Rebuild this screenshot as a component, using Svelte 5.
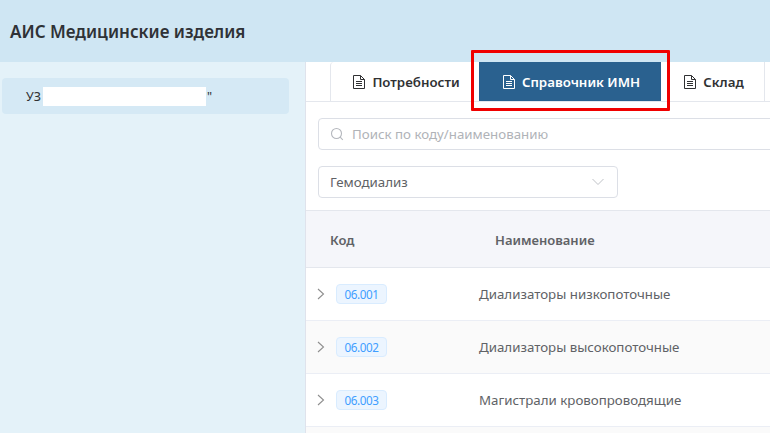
<script>
	const tabs = [
		{ name: 'Потребности', active: false },
		{ name: 'Справочник ИМН', active: true },
		{ name: 'Склад', active: false }
	];

	const rows = [
		{ code: '06.001', name: 'Диализаторы низкопоточные' },
		{ code: '06.002', name: 'Диализаторы высокопоточные' },
		{ code: '06.003', name: 'Магистрали кровопроводящие' },
		{ code: '', name: '' }
	];
</script>

<div class="page">
	<header class="top">АИС Медицинские изделия</header>
	<div class="body">
		<aside class="side">
			<div class="org">
				<span>УЗ</span>
				<span class="mask"></span>
				<span>"</span>
			</div>
		</aside>
		<main class="content">
			<nav class="tabs">
				{#each tabs as tab}
					<div class="tab" class:active={tab.active}>
						<svg width="14" height="16" viewBox="0 0 14 16" fill="none" stroke="currentColor" stroke-width="1">
							<path d="M1.500 1.500h7l4 4v9h-11z" />
							<path d="M8.500 1.500v4h4M4 7.500h6M4 9.500h6M4 11.500h6" />
						</svg>
						<span>{tab.name}</span>
					</div>
				{/each}
				<div class="marker"></div>
			</nav>
			<div class="filters">
				<div class="search">
					<svg width="14" height="14" viewBox="0 0 14 14" fill="none" stroke="#b4b7bd" stroke-width="1.1">
						<circle cx="6.5" cy="6.5" r="5" />
						<path d="M10.2 10.2l2.6 2.6" />
					</svg>
					<span>Поиск по коду/наименованию</span>
				</div>
				<div class="select">
					<span>Гемодиализ</span>
					<svg width="14" height="8" viewBox="0 0 14 8" fill="none" stroke="#bfc2c7" stroke-width="1">
						<path d="M1.500 1l5.500 5.500L12.500 1" />
					</svg>
				</div>
			</div>
			<div class="thead">
				<div class="code-col">Код</div>
				<div class="name-col">Наименование</div>
			</div>
			{#each rows as row, i}
				<div class="row" class:odd={i % 2 === 1}>
					{#if row.code}
						<svg width="8" height="12" viewBox="0 0 8 12" fill="none" stroke="#8e8e8e" stroke-width="1.1">
							<path d="M1 1l5.500 5L1 11" />
						</svg>
						<span class="tag">{row.code}</span>
						<span class="name">{row.name}</span>
					{/if}
				</div>
			{/each}
		</main>
	</div>
</div>

<style>
	:global(body) {
		margin: 0;
		overflow: hidden;
	}

	.page {
		width: 770px;
		height: 433px;
		overflow: hidden;
		font-family: 'Noto Sans', sans-serif;
		font-size: 13.3px;
		color: #303133;
		background: #fff;
	}

	.top {
		height: 62px;
		display: flex;
		align-items: center;
		padding-left: 10px;
		box-sizing: border-box;
		background: #cfe6f3;
		font-size: 17px;
		font-weight: 600;
		color: #2f3236;
	}

	.body {
		display: flex;
		height: 371px;
	}

	.side {
		width: 306px;
		flex: none;
		box-sizing: border-box;
		padding: 16px 16px 0 2px;
		background: #e4f2f9;
		border-right: 1px solid #dfe3ec;
	}

	.org {
		display: flex;
		align-items: center;
		height: 36px;
		padding-left: 24px;
		border-radius: 4px;
		background: #d5e9f5;
		font-size: 12.5px;
	}

	.mask {
		width: 163px;
		height: 19px;
		margin-left: 2px;
		margin-right: 1px;
		background: #fff;
	}

	.content {
		flex: 1;
		min-width: 0;
	}

	.tabs {
		display: flex;
		position: relative;
		height: 40px;
		box-sizing: border-box;
		padding-left: 24px;
		border-bottom: 1px solid #e4e7ed;
	}

	.tab {
		display: flex;
		align-items: center;
		justify-content: center;
		gap: 6px;
		height: 39px;
		padding-left: 2px;
		box-sizing: border-box;
		font-weight: 600;
		color: #303133;
		border-right: 1px solid #e4e7ed;
	}

	.tab:nth-child(1) {
		width: 149px;
		border-left: 1px solid #e4e7ed;
		border-top-left-radius: 4px;
		border-right: none;
	}

	.tab:nth-child(2) {
		width: 182px;
		background: #2a618f;
		color: #fff;
		border-right: none;
	}

	.tab:nth-child(3) {
		width: 104px;
	}

	.marker {
		position: absolute;
		left: 165px;
		top: -12px;
		width: 199px;
		height: 61px;
		box-sizing: border-box;
		border: 3px solid #f00000;
		border-radius: 1px;
	}

	.filters {
		display: flex;
		flex-direction: column;
		gap: 16px;
		padding: 16px 0 12px 12px;
	}

	.search,
	.select {
		display: flex;
		align-items: center;
		height: 32px;
		box-sizing: border-box;
		border: 1px solid #dcdfe6;
		border-radius: 4px;
	}

	.search {
		width: 470px;
		gap: 8px;
		padding-left: 11px;
		color: #b0b3b8;
	}

	.select {
		width: 300px;
		justify-content: space-between;
		padding: 0 12px 0 11px;
		color: #606266;
	}

	.thead {
		display: flex;
		align-items: center;
		height: 58px;
		box-sizing: border-box;
		padding-top: 2px;
		background: #f5f6fa;
		border-top: 1px solid #e4e7ed;
		border-bottom: 1px solid #e4e7ed;
		font-size: 13px;
		font-weight: 600;
		color: #606266;
	}

	.code-col {
		width: 189px;
		padding-left: 24px;
		box-sizing: border-box;
	}

	.row {
		display: flex;
		align-items: center;
		height: 53px;
		box-sizing: border-box;
		padding-left: 11px;
		border-bottom: 1px solid #ebeef5;
		color: #606266;
	}

	.row.odd {
		background: #fafafa;
	}

	.tag {
		width: 51px;
		height: 20px;
		margin-left: 11px;
		box-sizing: border-box;
		display: flex;
		align-items: center;
		justify-content: center;
		border: 1px solid #d9ecff;
		border-radius: 4px;
		background: #ecf5ff;
		color: #409eff;
		font-size: 11.7px;
		letter-spacing: -0.4px;
	}

	.name {
		margin-left: 92px;
	}
</style>
